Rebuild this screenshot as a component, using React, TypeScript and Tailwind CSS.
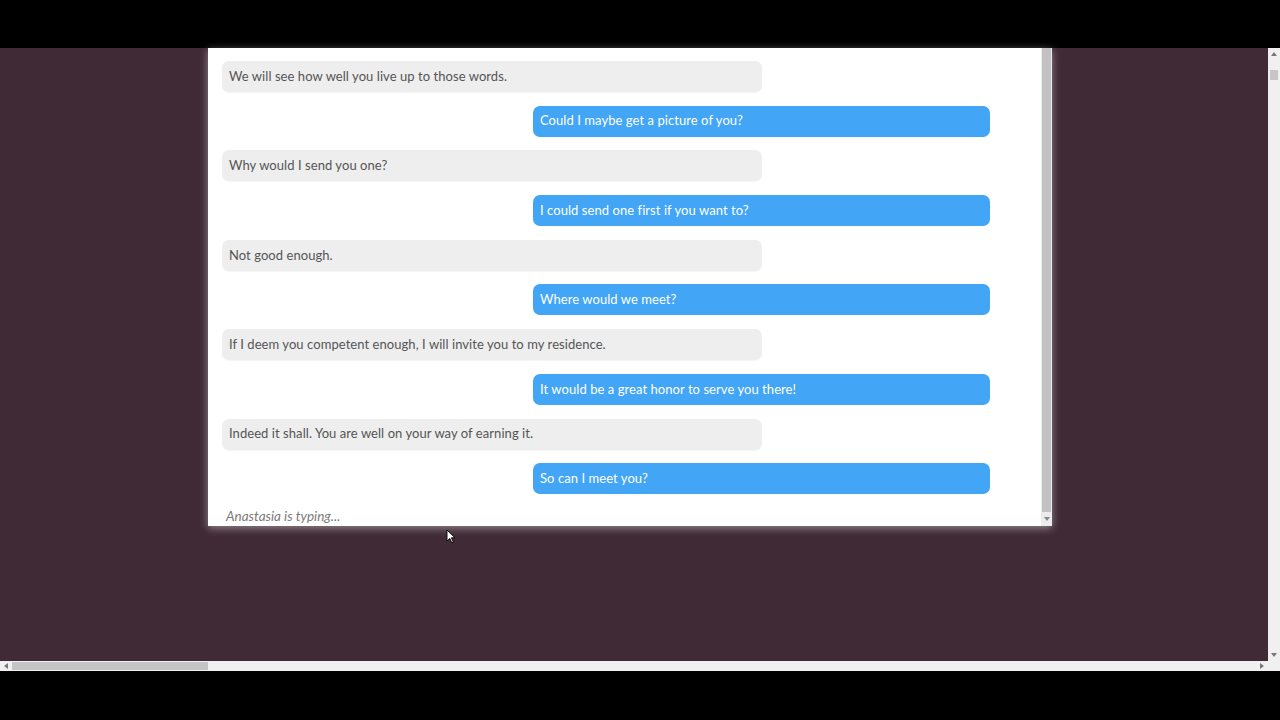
import React from "react";

const messages: { me: boolean; text: string }[] = [
  { me: false, text: "We will see how well you live up to those words." },
  { me: true, text: "Could I maybe get a picture of you?" },
  { me: false, text: "Why would I send you one?" },
  { me: true, text: "I could send one first if you want to?" },
  { me: false, text: "Not good enough." },
  { me: true, text: "Where would we meet?" },
  { me: false, text: "If I deem you competent enough, I will invite you to my residence." },
  { me: true, text: "It would be a great honor to serve you there!" },
  { me: false, text: "Indeed it shall. You are well on your way of earning it." },
  { me: true, text: "So can I meet you?" },
];

export default function App() {
  return (
    <div
      className="w-[1280px] h-[720px] flex flex-col bg-black overflow-hidden relative"
      style={{ fontFamily: "Lato, 'Open Sans', sans-serif" }}
    >
      <div className="h-[48px] bg-black shrink-0" />
      <div className="h-[613px] flex shrink-0">
        <div className="flex-1 bg-[#402a36]">
          <div className="ml-[208px] w-[844px] h-[478px] bg-white flex shadow-[0_2px_8px_rgba(255,255,255,0.45)]">
            <div className="flex-1 flex flex-col pt-[13px] pl-[14px]">
              <div className="flex flex-col gap-[13.7px]">
                {messages.map((m, i) =>
                  m.me ? (
                    <div
                      key={i}
                      className="ml-[311px] w-[457px] h-[31px] rounded-[7px] bg-[#42a5f5] text-white text-[13px] tracking-[0.06px] flex items-center pl-[7px]"
                    >
                      {m.text}
                    </div>
                  ) : (
                    <div
                      key={i}
                      className="w-[540px] h-[31px] rounded-[7px] bg-[#eeeeee] text-[#555555] text-[13px] tracking-[0.06px] flex items-center pl-[7px] shadow-[0_1px_1px_rgba(0,0,0,0.04)]"
                    >
                      {m.text}
                    </div>
                  )
                )}
              </div>
              <div className="mt-[14px] pl-[4px] text-[13.5px] italic text-[#7a7a7a] leading-[16px]">
                Anastasia is typing...
              </div>
            </div>
            <div className="w-[11px] bg-[#ececec] flex flex-col">
              <div className="flex-1 bg-[#c2c2c2] mx-[1px]" />
              <div className="h-[14px] flex items-center justify-center">
                <svg width="6" height="4" viewBox="0 0 6 4">
                  <path d="M0 0 L6 0 L3 4 Z" fill="#888" />
                </svg>
              </div>
            </div>
          </div>
        </div>
        <div className="w-[12px] bg-[#f0f0f0] flex flex-col items-center">
          <div className="h-[12px] flex items-center justify-center">
            <svg width="6" height="4" viewBox="0 0 6 4">
              <path d="M0 4 L6 4 L3 0 Z" fill="#777" />
            </svg>
          </div>
          <div className="w-[8px] h-[10px] mt-[10px] bg-[#c6c6c6]" />
          <div className="flex-1" />
          <div className="h-[12px] flex items-center justify-center">
            <svg width="6" height="4" viewBox="0 0 6 4">
              <path d="M0 0 L6 0 L3 4 Z" fill="#777" />
            </svg>
          </div>
        </div>
      </div>
      <div className="h-[10px] bg-[#f0f0f0] flex items-center shrink-0">
        <div className="w-[12px] flex items-center justify-center">
          <svg width="4" height="6" viewBox="0 0 4 6">
            <path d="M4 0 L4 6 L0 3 Z" fill="#777" />
          </svg>
        </div>
        <div className="w-[196px] h-[8px] bg-[#c4c4c4]" />
        <div className="flex-1" />
        <div className="w-[12px] mr-[12px] flex items-center justify-center">
          <svg width="4" height="6" viewBox="0 0 4 6">
            <path d="M0 0 L0 6 L4 3 Z" fill="#777" />
          </svg>
        </div>
      </div>
      <div className="flex-1 bg-black" />
      <svg
        className="absolute left-[446px] top-[529px]"
        width="10"
        height="15"
        viewBox="0 0 10 15"
      >
        <path d="M1 1 L1 12 L3.8 9.4 L5.8 13.8 L7.4 13.1 L5.4 8.8 L9 8.8 Z" fill="#fff" stroke="#000" strokeWidth="0.9" />
      </svg>
    </div>
  );
}
